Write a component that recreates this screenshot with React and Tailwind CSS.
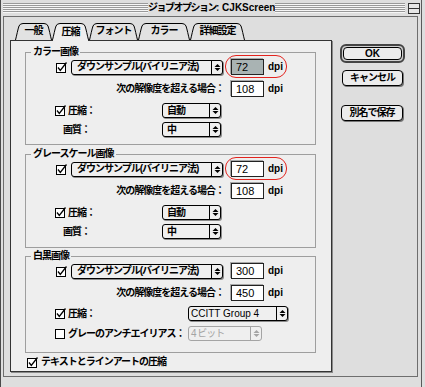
import React from "react";

const JP = "tracking-[-1px]";

function CheckBox({ checked = true }) {
  return (
    <svg width="11" height="11" viewBox="0 0 11 11" className="shrink-0">
      <rect x="0.5" y="1.5" width="9" height="9" fill="#fff" stroke="#000" />
      {checked && (
        <path d="M2 5.5 L4.3 8.5 L10.5 0.5" fill="none" stroke="#000" strokeWidth="1.3" />
      )}
    </svg>
  );
}

function Arrows({ color = "#000" }) {
  return (
    <svg width="7" height="9" viewBox="0 0 7 9">
      <path d="M0.5 4 L3.5 1 L6.5 4Z" fill={color} />
      <path d="M0.5 5 L3.5 8 L6.5 5Z" fill={color} />
    </svg>
  );
}

function Popup({ className, children, disabled, pad = "pl-[4px]" }) {
  return (
    <div
      className={`flex h-[15px] items-stretch rounded-[3px] border bg-[#efefef] ${
        disabled ? "border-[#a4a4a4] text-[#a4a4a4]" : "border-black shadow-[1px_1px_0_#8a8a8a]"
      } ${className}`}
    >
      <div className={`flex flex-1 items-center justify-start overflow-hidden whitespace-nowrap font-bold ${pad}`}>
        {children}
      </div>
      <div
        className={`flex w-[11px] items-center justify-center border-l ${
          disabled ? "border-[#a4a4a4]" : "border-black"
        }`}
      >
        <Arrows color={disabled ? "#a4a4a4" : "#000"} />
      </div>
    </div>
  );
}

function Field({ value, selected }) {
  return (
    <div
      className={`flex h-[16px] w-[33px] items-center border border-[#222] pl-[4px] shadow-[-1px_-1px_0_#a8a8a8] ${
        selected ? "bg-[#a9b3b3]" : "bg-white"
      }`}
    >
      <span className="text-[11px]">{value}</span>
    </div>
  );
}

function Tab({ label, w, cls, active }) {
  const d = `M0.5 17 C1.8 12 2.8 6.5 4 3 Q5 0.5 8 0.5 L${w - 8} 0.5 Q${w - 5} 0.5 ${w - 4} 3 C${w - 2.8} 6.5 ${w - 1.8} 12 ${w - 0.5} 17`;
  return (
    <div className={`relative flex shrink-0 items-center justify-center ${cls} ${active ? "h-[18px]" : "h-[17px]"}`}>
      <svg className="absolute left-0 top-0" width={w} height="18" viewBox={`0 0 ${w} 18`}>
        <path d={d} fill={active ? "#eeeeee" : "#e2e2e2"} stroke="#000" />
        {active && <rect x="1" y="16.5" width={w - 2} height="1.5" fill="#eeeeee" />}
      </svg>
      <span className={`relative -mt-[1px] font-bold ${JP}`}>{label}</span>
    </div>
  );
}

function DownRow({ value, selected, circle }) {
  return (
    <div className="mt-[1px] flex h-[16px] items-center pl-[30px]">
      <CheckBox />
      <Popup className="ml-[4px] w-[152px]">
        <span className={`pl-[1px] ${JP}`}>ダウンサンプル(バイリニア法)</span>
      </Popup>
      <div className="relative ml-[8px] flex items-center">
        <Field value={value} selected={selected} />
        <span className="ml-[4px] font-bold">dpi</span>
        {circle && (
          <div className="absolute -left-[6px] -top-[4px] h-[23px] w-[62px] rounded-[11px] border border-[#e3231e]" />
        )}
      </div>
    </div>
  );
}

function ThreshRow({ value }) {
  return (
    <div className="mt-[6px] flex h-[16px] items-center">
      <div className={`w-[198px] text-right font-bold ${JP}`}>次の解像度を超える場合：</div>
      <div className="ml-[7px]">
        <Field value={value} />
      </div>
      <span className="ml-[4px] font-bold">dpi</span>
    </div>
  );
}

function Group({ title, cls, children }) {
  return (
    <fieldset className={`w-[291px] border border-[#9e9e9e] ${cls}`}>
      <legend className={`ml-[5px] px-[2px] font-bold leading-[12px] ${JP}`}>{title}</legend>
      {children}
    </fieldset>
  );
}

function ColorLike({ title, cls, selected, circle }) {
  return (
    <Group title={title} cls={cls}>
      <DownRow value="72" selected={selected} circle={circle} />
      <ThreshRow value="108" />
      <div className="mt-[6px] flex h-[15px] items-center">
        <div className="flex w-[136px] items-center pl-[29px]">
          <CheckBox />
          <span className={`ml-[2px] font-bold ${JP}`}>圧縮：</span>
        </div>
        <Popup className="w-[59px]">
          <span className={JP}>自動</span>
        </Popup>
      </div>
      <div className="mt-[4px] flex h-[15px] items-center">
        <div className="w-[136px] pl-[37px]">
          <span className={`font-bold ${JP}`}>画質：</span>
        </div>
        <Popup className="w-[59px]">
          <span className={JP}>中</span>
        </Popup>
      </div>
    </Group>
  );
}

const stripes =
  "h-[10px] bg-[repeating-linear-gradient(to_bottom,#999999_0px,#999999_1px,#f6f6f6_1px,#f6f6f6_2px)]";

export default function App() {
  return (
    <div className="flex h-[387px] w-[425px] flex-col overflow-hidden border-l border-[#4a4a4a] bg-[#dedede] font-['Liberation_Sans','Noto_Sans_CJK_JP',sans-serif] text-[10px] leading-[12px] text-black shadow-[inset_-3px_0_0_#dedede,inset_-4px_0_0_#5a5a5a]">
      {/* title bar */}
      <div className="flex h-[16px] shrink-0 items-center pl-[2px] pr-[5px]">
        <div className={`w-[145px] ${stripes}`} />
        <div className="w-[127px] whitespace-nowrap text-center font-bold">
          <span className="tracking-[-1.5px]">ジョブオプション</span>: CJKScreen
        </div>
        <div className={`flex-1 ${stripes}`} />
        <svg className="ml-[3px]" width="12" height="11" viewBox="0 0 12 11">
          <rect x="0.5" y="0.5" width="11" height="10" fill="#e6e6e6" stroke="#333" />
          <line x1="1" y1="5.5" x2="11" y2="5.5" stroke="#333" />
        </svg>
      </div>

      <div className="ml-[2px] flex h-[361px] w-[415px] border border-[#6e6e6e] pl-[6px] pt-[6px]">
        {/* tabs + panel */}
        <div className="flex w-[322px] flex-col">
          <div className="relative z-10 flex h-[17px] items-start pl-[5px]">
            <Tab label="一般" w={37} cls="w-[37px]" />
            <Tab label="圧縮" w={37} cls="w-[37px]" active />
            <Tab label="フォント" w={49} cls="w-[49px]" />
            <Tab label="カラー" w={52} cls="w-[52px]" />
            <Tab label="詳細設定" w={55} cls="w-[55px]" />
          </div>
          <div className="flex h-[332px] flex-col border border-[#333] bg-[#eeeeee] pl-[14px] pt-[5px] shadow-[1px_1px_0_#8a8a8a]">
            <ColorLike title="カラー画像" cls="h-[99px]" selected circle />
            <ColorLike title="グレースケール画像" cls="mt-[3px] h-[100px]" circle />
            <Group title="白黒画像" cls="mt-[2px] h-[103px]">
              <DownRow value="300" />
              <ThreshRow value="450" />
              <div className="mt-[5px] flex h-[15px] items-center">
                <div className="flex w-[162px] items-center pl-[29px]">
                  <CheckBox />
                  <span className={`ml-[2px] font-bold ${JP}`}>圧縮：</span>
                </div>
                <Popup className="w-[100px]" pad="pl-[2px]">
                  <span className="font-normal">CCITT Group 4</span>
                </Popup>
              </div>
              <div className="mt-[5px] flex h-[15px] items-center">
                <div className="flex w-[162px] items-center pl-[29px]">
                  <CheckBox checked={false} />
                  <span className={`ml-[2px] font-bold ${JP}`}>グレーのアンチエイリアス：</span>
                </div>
                <Popup className="w-[74px]" pad="pl-[2px]" disabled>
                  <span className={`font-normal ${JP}`}>4 ビット</span>
                </Popup>
              </div>
            </Group>
            <div className="mt-[3px] flex h-[12px] items-center pl-[2px]">
              <CheckBox />
              <span className={`ml-[3px] font-bold ${JP}`}>テキストとラインアートの圧縮</span>
            </div>
          </div>
        </div>

        {/* buttons */}
        <div className="ml-[8px] flex flex-col pt-[21px]">
          <div className="flex h-[19px] w-[65px] rounded-[6px] border-[2px] border-[#444] bg-[#cfcfcf] p-[1px]">
            <button className="flex-1 rounded-[4px] border border-black bg-[#ececec] font-bold">OK</button>
          </div>
          <button className={`ml-[2px] mt-[7px] h-[16px] w-[61px] rounded-[4px] border border-black bg-[#ececec] font-bold shadow-[1px_1px_0_#777] ${JP}`}>
            キャンセル
          </button>
          <button className={`ml-[1px] mt-[19px] h-[16px] w-[62px] rounded-[4px] border border-black bg-[#ececec] font-bold shadow-[1px_1px_0_#777] ${JP}`}>
            別名で保存
          </button>
        </div>
      </div>
    </div>
  );
}
